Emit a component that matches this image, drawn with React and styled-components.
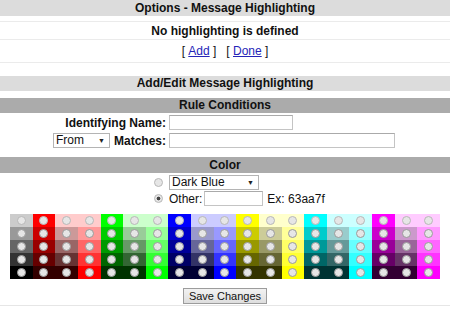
import React from 'react';
import styled, { createGlobalStyle } from 'styled-components';

const Global = createGlobalStyle`
  html, body { margin: 0; padding: 0; background: #fff; }
  body {
    font-family: "Liberation Sans", Arial, sans-serif;
    font-size: 12px;
    color: #111;
  }
`;

const Page = styled.div`
  width: 450px;
  display: flex;
  flex-direction: column;
`;

const Bar = styled.div`
  height: ${p => p.$h}px;
  line-height: ${p => p.$h}px;
  margin-top: ${p => p.$mt || 0}px;
  background: ${p => (p.$dark ? '#ababab' : '#dcdcdc')};
  text-align: center;
  font-weight: bold;
  font-size: 12px;
`;

const LineRow = styled.div`
  height: ${p => p.$h}px;
  margin-top: ${p => p.$mt || 0}px;
  border-top: ${p => (p.$top ? '1px solid #ebebeb' : 'none')};
  border-bottom: 1px solid #ebebeb;
  display: flex;
  align-items: center;
  justify-content: center;
  font-weight: ${p => (p.$bold ? 'bold' : 'normal')};
  white-space: pre;
`;

const Link = styled.a`
  color: #2424b8;
  text-decoration: underline;
`;

const FormGrid = styled.div`
  display: grid;
  grid-template-columns: 166px 1fr;
  column-gap: 3px;
  row-gap: ${p => p.$gap}px;
  margin-top: ${p => p.$mt}px;
  align-items: center;
`;

const LeftCell = styled.div`
  justify-self: end;
  display: flex;
  align-items: center;
  gap: 4px;
  margin-right: ${p => p.$mr || 0}px;
`;

const RightCell = styled.div`
  display: flex;
  align-items: center;
  gap: ${p => p.$gap || 0}px;
  height: 15px;
`;

const Label = styled.span`
  font-weight: bold;
`;

const TextInput = styled.input`
  box-sizing: border-box;
  width: ${p => p.$w}px;
  height: 15px;
  border: 1px solid #c4c4c4;
  border-top-color: #aaa;
  padding: 0 2px;
  margin: 0;
  font: 12px "Liberation Sans", Arial, sans-serif;
  background: #fff;
`;

const SelectBox = styled.span`
  box-sizing: border-box;
  display: inline-flex;
  align-items: center;
  width: ${p => p.$w}px;
  height: 15px;
  border: 1px solid #b4b4b4;
  background: #fff;
  padding: 0 4px 0 2px;
`;

const NativeSelect = styled.select`
  appearance: none;
  -webkit-appearance: none;
  border: none;
  background: transparent;
  font: 12px "Liberation Sans", Arial, sans-serif;
  color: #111;
  padding: 0;
  margin: 0;
  flex: 1;
  height: 13px;
  line-height: 13px;
  outline: none;
`;

const Arrow = styled.span`
  font-size: 7px;
  color: #222;
`;

const Radio = styled.input.attrs({ type: 'radio' })`
  appearance: none;
  -webkit-appearance: none;
  box-sizing: border-box;
  width: 9px;
  height: 9px;
  margin: 0;
  border-radius: 50%;
  border: 1px solid ${p => (p.$soft ? '#b8b8b8' : '#9a9a9a')};
  background: #e6e6e6;
  &:checked {
    background: radial-gradient(circle, #444 0 1.6px, #e6e6e6 2.2px);
  }
`;

const Swatches = styled.div`
  width: 430px;
  margin: 8px auto 0;
  display: grid;
  grid-template-columns: repeat(19, 1fr);
  grid-auto-rows: 13px;
`;

const Swatch = styled.label`
  display: flex;
  align-items: center;
  justify-content: center;
  background: ${p => p.$c};
`;

const ButtonRow = styled.div`
  margin-top: 9px;
  display: flex;
  justify-content: center;
  padding-bottom: 1px;
  border-bottom: 1px solid #e6e6e6;
`;

const Button = styled.button`
  height: 16px;
  padding: 0 5px;
  margin: 0;
  font: 11px "Liberation Sans", Arial, sans-serif;
  color: #111;
  border: 1px solid #9c9c9c;
  border-radius: 0;
  background: linear-gradient(#f2f2f2, #dedede);
  line-height: 14px;
`;

const L = ['f', 'c', '9', '6', '3'];
const D = ['c', '9', '6', '3', '0'];
const hues = [
  [1, 0, 0],
  [0, 1, 0],
  [0, 0, 1],
  [1, 1, 0],
  [0, 1, 1],
  [1, 0, 1],
];

const columns = [['#ccc', '#999', '#666', '#333', '#000']];
hues.forEach(h => {
  columns.push(L.map(v => '#' + h.map(x => (x ? v : '0')).join('')));
  columns.push(L.map((v, i) => '#' + h.map(x => (x ? v : D[i])).join('')));
  columns.push(D.map(v => '#' + h.map(x => (x ? 'f' : v)).join('')));
});

const cells = [];
for (let r = 0; r < 5; r++) {
  for (let c = 0; c < columns.length; c++) {
    cells.push({ key: `${r}-${c}`, color: columns[c][r], light: r === 0 });
  }
}

export default function App() {
  return (
    <Page>
      <Global />
      <Bar $h={16}>Options - Message Highlighting</Bar>
      <LineRow $h={17} $mt={5} $top $bold>No highlighting is defined</LineRow>
      <LineRow $h={22}>
        {'[ '}<Link href="#">Add</Link>{' ]   [ '}<Link href="#">Done</Link>{' ]'}
      </LineRow>
      <Bar $h={15} $mt={13}>Add/Edit Message Highlighting</Bar>
      <Bar $h={15} $mt={7} $dark>Rule Conditions</Bar>
      <FormGrid $gap={3} $mt={2}>
        <LeftCell>
          <Label>Identifying Name:</Label>
        </LeftCell>
        <RightCell>
          <TextInput $w={124} />
        </RightCell>
        <LeftCell>
          <SelectBox $w={57}>
            <NativeSelect defaultValue="From">
              <option>From</option>
              <option>To</option>
              <option>Subject</option>
            </NativeSelect>
            <Arrow>▼</Arrow>
          </SelectBox>
          <Label>Matches:</Label>
        </LeftCell>
        <RightCell>
          <TextInput $w={226} />
        </RightCell>
      </FormGrid>
      <Bar $h={16} $mt={9} $dark>Color</Bar>
      <FormGrid $gap={1} $mt={2}>
        <LeftCell $mr={3}>
          <Radio name="color" $soft />
        </LeftCell>
        <RightCell>
          <SelectBox $w={90}>
            <NativeSelect defaultValue="Dark Blue">
              <option>Dark Blue</option>
              <option>Red</option>
              <option>Green</option>
            </NativeSelect>
            <Arrow>▼</Arrow>
          </SelectBox>
        </RightCell>
        <LeftCell $mr={3}>
          <Radio name="color" defaultChecked $soft />
        </LeftCell>
        <RightCell $gap={2}>
          <span>Other:</span>
          <TextInput $w={59} />
          <span style={{ marginLeft: 2 }}>Ex: 63aa7f</span>
        </RightCell>
      </FormGrid>
      <Swatches>
        {cells.map(c => (
          <Swatch key={c.key} $c={c.color}>
            <Radio name="swatch" $soft={c.light} />
          </Swatch>
        ))}
      </Swatches>
      <ButtonRow>
        <Button type="button">Save Changes</Button>
      </ButtonRow>
    </Page>
  );
}
